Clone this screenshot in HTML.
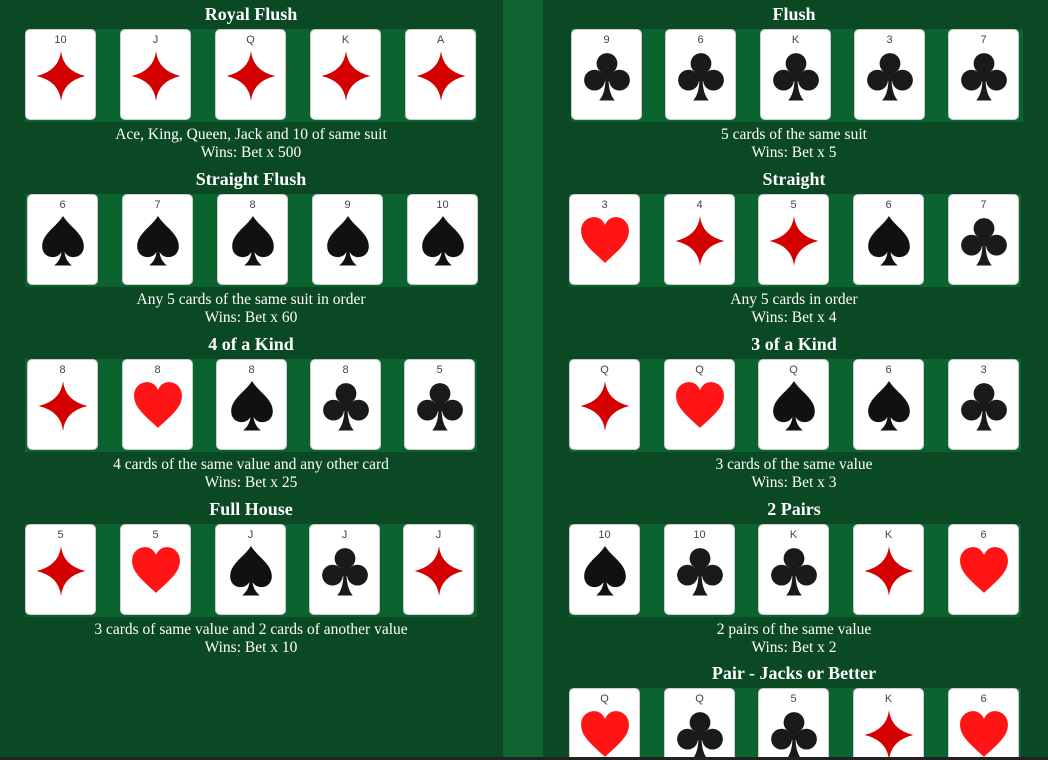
<!DOCTYPE html>
<html style="overflow:hidden;height:760px"><head><meta charset="utf-8"><style>
html,body{margin:0;overflow:hidden}
body{width:1048px;height:760px;background:#0b4824;position:relative;font-family:"Liberation Serif",serif;color:#fff}
.wrap{position:absolute;left:0;top:0;width:1048px;height:757px;overflow:hidden}
.strip{position:absolute;left:503px;top:0;width:40px;height:757px;background:#0f6431}
.bot{position:absolute;left:0;top:757px;width:1048px;height:3px;background:#222}
.sec{position:absolute;width:480px}
.t{position:absolute;top:4px;left:0;width:100%;text-align:center;font-weight:bold;font-size:18px;line-height:20px}
.band{position:absolute;top:29px;left:0;width:452px;height:93px;background:#0b6430}
.c{position:absolute;top:0;width:71px;height:91px;background:#fff;border:1px solid #ccc;border-radius:5px;box-sizing:border-box}
.c span{position:absolute;top:4px;left:0;width:100%;text-align:center;font:11px "Liberation Sans",sans-serif;color:#444}
.c svg{position:absolute;left:9px;top:20px;width:52px;height:52px}
.d{position:absolute;top:126px;left:0;width:100%;text-align:center;font-size:15.5px;line-height:18px}
</style></head><body>
<svg width="0" height="0" style="position:absolute">
<defs>
<symbol id="D" viewBox="0 0 100 100"><path fill="#d40000" d="M50 2Q54 40 97 50Q54 60 50 98Q46 60 3 50Q46 40 50 2Z"/></symbol>
<symbol id="H" viewBox="0 0 100 100"><path fill="#ff1515" d="M50 92C22 66 4 52 4 30C4 13 17 4 29 4C39 4 46 10 50 19C54 10 61 4 71 4C83 4 96 13 96 30C96 52 78 66 50 92Z"/></symbol>
<symbol id="S" viewBox="0 0 100 100"><path fill="#111" d="M50 2C38 22 10 36 10 60C10 74 20 81 30 81C38 81 44 77 47 71C46 82 41 91 33 97L67 97C59 91 54 82 53 71C56 77 62 81 70 81C80 81 90 74 90 60C90 36 62 22 50 2Z"/></symbol>
<symbol id="C" viewBox="0 0 100 100"><g fill="#1a1a1a"><circle cx="50" cy="26" r="20"/><circle cx="26" cy="58" r="20"/><circle cx="74" cy="58" r="20"/><rect x="40" y="35" width="20" height="25"/><path d="M47 55C47 76 42 89 35 97L65 97C58 89 53 76 53 55Z"/></g></symbol>
</defs></svg>
<div class="wrap">
<div class="strip"></div>

<div class="sec" style="left:11px;top:0"><div class="t">Royal Flush</div><div class="band" style="left:14px"></div>
<div style="position:absolute;top:29px;left:14px">
<div class="c" style="left:0"><span>10</span><svg><use href="#D"/></svg></div>
<div class="c" style="left:95px"><span>J</span><svg><use href="#D"/></svg></div>
<div class="c" style="left:190px"><span>Q</span><svg><use href="#D"/></svg></div>
<div class="c" style="left:285px"><span>K</span><svg><use href="#D"/></svg></div>
<div class="c" style="left:380px"><span>A</span><svg><use href="#D"/></svg></div></div>
<div class="d">Ace, King, Queen, Jack and 10 of same suit<br>Wins: Bet x 500</div></div>

<div class="sec" style="left:11px;top:165px"><div class="t">Straight Flush</div><div class="band" style="left:14px"></div>
<div style="position:absolute;top:29px;left:16px">
<div class="c" style="left:0"><span>6</span><svg><use href="#S"/></svg></div>
<div class="c" style="left:95px"><span>7</span><svg><use href="#S"/></svg></div>
<div class="c" style="left:190px"><span>8</span><svg><use href="#S"/></svg></div>
<div class="c" style="left:285px"><span>9</span><svg><use href="#S"/></svg></div>
<div class="c" style="left:380px"><span>10</span><svg><use href="#S"/></svg></div></div>
<div class="d">Any 5 cards of the same suit in order<br>Wins: Bet x 60</div></div>

<div class="sec" style="left:11px;top:330px"><div class="t">4 of a Kind</div><div class="band" style="left:14px"></div>
<div style="position:absolute;top:29px;left:16px">
<div class="c" style="left:0"><span>8</span><svg><use href="#D"/></svg></div>
<div class="c" style="left:95px"><span>8</span><svg><use href="#H"/></svg></div>
<div class="c" style="left:189px"><span>8</span><svg><use href="#S"/></svg></div>
<div class="c" style="left:283px"><span>8</span><svg><use href="#C"/></svg></div>
<div class="c" style="left:377px"><span>5</span><svg><use href="#C"/></svg></div></div>
<div class="d">4 cards of the same value and any other card<br>Wins: Bet x 25</div></div>

<div class="sec" style="left:11px;top:495px"><div class="t">Full House</div><div class="band" style="left:14px"></div>
<div style="position:absolute;top:29px;left:14px">
<div class="c" style="left:0"><span>5</span><svg><use href="#D"/></svg></div>
<div class="c" style="left:95px"><span>5</span><svg><use href="#H"/></svg></div>
<div class="c" style="left:190px"><span>J</span><svg><use href="#S"/></svg></div>
<div class="c" style="left:284px"><span>J</span><svg><use href="#C"/></svg></div>
<div class="c" style="left:378px"><span>J</span><svg><use href="#D"/></svg></div></div>
<div class="d">3 cards of same value and 2 cards of another value<br>Wins: Bet x 10</div></div>

<div class="sec" style="left:554px;top:0"><div class="t">Flush</div><div class="band" style="left:17px"></div>
<div style="position:absolute;top:29px;left:17px">
<div class="c" style="left:0"><span>9</span><svg><use href="#C"/></svg></div>
<div class="c" style="left:94px"><span>6</span><svg><use href="#C"/></svg></div>
<div class="c" style="left:189px"><span>K</span><svg><use href="#C"/></svg></div>
<div class="c" style="left:283px"><span>3</span><svg><use href="#C"/></svg></div>
<div class="c" style="left:377px"><span>7</span><svg><use href="#C"/></svg></div></div>
<div class="d">5 cards of the same suit<br>Wins: Bet x 5</div></div>

<div class="sec" style="left:554px;top:165px"><div class="t">Straight</div><div class="band" style="left:15px"></div>
<div style="position:absolute;top:29px;left:15px">
<div class="c" style="left:0"><span>3</span><svg><use href="#H"/></svg></div>
<div class="c" style="left:95px"><span>4</span><svg><use href="#D"/></svg></div>
<div class="c" style="left:189px"><span>5</span><svg><use href="#D"/></svg></div>
<div class="c" style="left:284px"><span>6</span><svg><use href="#S"/></svg></div>
<div class="c" style="left:379px"><span>7</span><svg><use href="#C"/></svg></div></div>
<div class="d">Any 5 cards in order<br>Wins: Bet x 4</div></div>

<div class="sec" style="left:554px;top:330px"><div class="t">3 of a Kind</div><div class="band" style="left:15px"></div>
<div style="position:absolute;top:29px;left:15px">
<div class="c" style="left:0"><span>Q</span><svg><use href="#D"/></svg></div>
<div class="c" style="left:95px"><span>Q</span><svg><use href="#H"/></svg></div>
<div class="c" style="left:189px"><span>Q</span><svg><use href="#S"/></svg></div>
<div class="c" style="left:284px"><span>6</span><svg><use href="#S"/></svg></div>
<div class="c" style="left:379px"><span>3</span><svg><use href="#C"/></svg></div></div>
<div class="d">3 cards of the same value<br>Wins: Bet x 3</div></div>

<div class="sec" style="left:554px;top:495px"><div class="t">2 Pairs</div><div class="band" style="left:15px"></div>
<div style="position:absolute;top:29px;left:15px">
<div class="c" style="left:0"><span>10</span><svg><use href="#S"/></svg></div>
<div class="c" style="left:95px"><span>10</span><svg><use href="#C"/></svg></div>
<div class="c" style="left:189px"><span>K</span><svg><use href="#C"/></svg></div>
<div class="c" style="left:284px"><span>K</span><svg><use href="#D"/></svg></div>
<div class="c" style="left:379px"><span>6</span><svg><use href="#H"/></svg></div></div>
<div class="d">2 pairs of the same value<br>Wins: Bet x 2</div></div>

<div class="sec" style="left:554px;top:659px"><div class="t">Pair - Jacks or Better</div><div class="band" style="left:15px"></div>
<div style="position:absolute;top:29px;left:15px">
<div class="c" style="left:0"><span>Q</span><svg><use href="#H"/></svg></div>
<div class="c" style="left:95px"><span>Q</span><svg><use href="#C"/></svg></div>
<div class="c" style="left:189px"><span>5</span><svg><use href="#C"/></svg></div>
<div class="c" style="left:284px"><span>K</span><svg><use href="#D"/></svg></div>
<div class="c" style="left:379px"><span>6</span><svg><use href="#H"/></svg></div></div></div>
</div>
<div class="bot"></div>
</body></html>
